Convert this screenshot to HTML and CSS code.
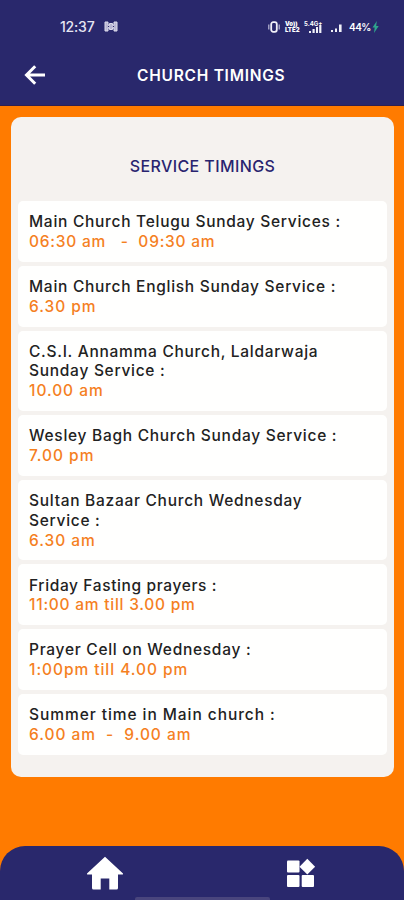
FILE: index.html
```html
<!DOCTYPE html>
<html lang="en">
<head>
    <meta charset="UTF-8">
    <meta name="viewport" content="width=device-width, initial-scale=1.0">
    <title>Church Timings</title>
    <link rel="stylesheet" href="styles.css">
</head>
<body>
    <header class="header">
        <div class="status-bar">
            <span class="clock">12:37</span>
            <svg class="status-app" viewBox="0 0 14 11" width="14" height="11">
                <path d="M1 1h3v3h1.500V2.500h3V4H10V1h3v9h-3V7H8.500v1.500h-3V7H4v3H1z" fill="#b9b7d3" stroke="#dddcec" stroke-width="1"/>
                <path d="M4 5.500h1M9 5.500h1" stroke="#29286c"/>
            </svg>
            <div class="status-right">
                <svg class="vibrate" viewBox="0 0 14 12" width="14" height="12">
                    <rect x="4.200" y="1.200" width="5.600" height="9.600" rx="2" fill="none" stroke="#f0f0f8" stroke-width="1.800"/>
                    <path d="M1.800 3.500v5M12.200 3.500v5" stroke="#bcbbd8" stroke-width="1.200"/>
                </svg>
                <span class="volte"><span>Vo))</span><span>LTE2</span></span>
                <span class="network">
                    <span class="speed">5.4G+</span>
                    <svg viewBox="0 0 13 8" width="13" height="8" fill="#f0f0f8">
                        <path d="M0 6h2v2H0zM3.500 4h2.200v4H3.500zM7 2h2v6H7zM10.200 0h2.200v8h-2.200z"/>
                    </svg>
                </span>
                <svg class="signal" viewBox="0 0 14 12" width="14" height="12">
                    <path d="M1 9h2v2H1zM5 7.500h2V11H5zM9 3.500h2.600V11H9z" fill="#f0f0f8"/>
                </svg>
                <span class="battery">44%</span>
                <svg class="bolt" viewBox="0 0 7 12" width="7" height="12">
                    <path d="M4.800 0L.5 6.500h2.200L2 12l4.700-7H4.200z" fill="#2fa58c"/>
                </svg>
            </div>
        </div>
        <div class="title-bar">
            <svg class="back" viewBox="0 0 22 22" width="22" height="22">
                <path d="M11.200 2.200L2.500 11l8.700 8.800M3 11h18" fill="none" stroke="#fff" stroke-width="3"/>
            </svg>
            <h1 class="page-title">CHURCH TIMINGS</h1>
        </div>
    </header>

    <main class="card">
        <h2 class="card-title">SERVICE TIMINGS</h2>
        <ul class="services">
            <li class="service">
                <span class="name">Main Church Telugu Sunday Services :</span>
                <span class="time range">06:30 am&nbsp;&nbsp; -&nbsp; 09:30 am</span>
            </li>
            <li class="service">
                <span class="name">Main Church English Sunday Service :</span>
                <span class="time">6.30 pm</span>
            </li>
            <li class="service">
                <span class="name">C.S.I. Annamma Church, Laldarwaja<br>Sunday Service :</span>
                <span class="time">10.00 am</span>
            </li>
            <li class="service">
                <span class="name">Wesley Bagh Church Sunday Service :</span>
                <span class="time">7.00 pm</span>
            </li>
            <li class="service">
                <span class="name">Sultan Bazaar Church Wednesday<br>Service :</span>
                <span class="time">6.30 am</span>
            </li>
            <li class="service">
                <span class="name tight">Friday Fasting prayers :</span>
                <span class="time range">11:00 am till 3.00 pm</span>
            </li>
            <li class="service">
                <span class="name">Prayer Cell on Wednesday :</span>
                <span class="time">1:00pm till 4.00 pm</span>
            </li>
            <li class="service">
                <span class="name wide">Summer time in Main church :</span>
                <span class="time">6.00 am&nbsp; -&nbsp; 9.00 am</span>
            </li>
        </ul>
    </main>

    <nav class="tab-bar">
        <svg class="home" viewBox="0 0 38 34" width="38" height="34">
            <path d="M19 .8L37 17.500q.5 1-.5 1H32V32q0 1.500-1.500 1.500h-7.200V22.500h-8.600v11H7.500Q6 33.500 6 32V18.500H1.500q-1 0-.5-1z" fill="#fff"/>
        </svg>
        <svg class="widgets" viewBox="0 0 30 30" width="30" height="30" fill="#fff">
            <rect x="1" y="2.500" width="12.500" height="12" rx="1"/>
            <rect x="1" y="17" width="12.500" height="12" rx="1"/>
            <rect x="15.700" y="17" width="12.300" height="12" rx="1"/>
            <path d="M21.300.8l7.800 7.900-7.800 7.900-7.800-7.900z"/>
        </svg>
        <span class="gesture-bar"></span>
    </nav>
</body>
</html>
```
FILE: styles.css
```css
* {
    box-sizing: border-box;
}

body {
    margin: 0;
    height: 900px;
    display: flex;
    flex-direction: column;
    overflow: hidden;
    background-color: #ff7b00;
    font-family: Inter, "Open Sans", sans-serif;
}

.header {
    height: 106px;
    flex-shrink: 0;
    background-color: #29286c;
    border-bottom: 1px solid #30204f;
    color: #fff;
}

.status-bar {
    display: flex;
    align-items: center;
    height: 52px;
    padding: 1px 25px 0 60px;
}

.clock {
    width: 44px;
    font-size: 14px;
    font-weight: 500;
    letter-spacing: -0.2px;
    color: #e6e5f2;
}

.status-right {
    display: flex;
    align-items: center;
    margin-left: auto;
}

.volte {
    display: flex;
    flex-direction: column;
    width: 15px;
    margin-left: 4px;
    font-size: 6px;
    line-height: 6px;
    font-weight: 900;
}

.network {
    display: flex;
    flex-direction: column;
    align-items: flex-end;
    width: 18px;
    height: 12px;
    margin-left: 4px;
}

.speed {
    height: 4px;
    width: 18px;
    font-size: 6px;
    line-height: 5px;
    font-weight: 700;
}

.signal {
    margin-left: 8px;
}

.battery {
    margin-left: 5px;
    width: 23px;
    font-size: 10px;
    font-weight: 600;
    letter-spacing: -0.5px;
}

.title-bar {
    display: flex;
    align-items: center;
    height: 46px;
    padding-left: 24px;
}

.page-title {
    margin: 0 0 0 91px;
    font-size: 15.5px;
    font-weight: 600;
    white-space: nowrap;
    letter-spacing: 0.75px;
}

.card {
    height: 660px;
    flex-shrink: 0;
    margin: 11px 10px 0 11px;
    padding: 0 7px;
    border-radius: 10px;
    background-color: #f5f2ef;
}

.card-title {
    margin: 0;
    padding-top: 15px;
    height: 84px;
    line-height: 68px;
    font-size: 16px;
    font-weight: 500;
    text-align: center;
    color: #29246f;
    letter-spacing: 0.4px;
}

.services {
    display: flex;
    flex-direction: column;
    gap: 4px;
    margin: 0;
    padding: 0;
    list-style: none;
}

.service {
    padding: 11.15px 11px 10.15px;
    border-radius: 5px;
    background-color: #fffffe;
    font-size: 15.5px;
    line-height: 19.75px;
    font-weight: 500;
    white-space: nowrap;
}

.name,
.time {
    display: block;
}

.name {
    color: #222;
    letter-spacing: 0.72px;
}

.name.tight {
    letter-spacing: 0.62px;
}

.name.wide {
    letter-spacing: 0.94px;
}

.time {
    color: #f5801f;
    letter-spacing: 0.95px;
}

.time.range {
    letter-spacing: 0.76px;
}

.tab-bar {
    position: relative;
    display: flex;
    height: 54px;
    margin-top: auto;
    padding: 10px 0 0 86px;
    border-radius: 25px 25px 0 0;
    background-color: #29286c;
}

.widgets {
    margin: 2px 0 0 162px;
}

/* system gesture handle, cut off by the bottom edge */
.gesture-bar {
    position: absolute;
    left: 135px;
    bottom: 0;
    width: 135px;
    height: 3px;
    border-radius: 2px 2px 0 0;
    background-color: #49457d;
}
```
